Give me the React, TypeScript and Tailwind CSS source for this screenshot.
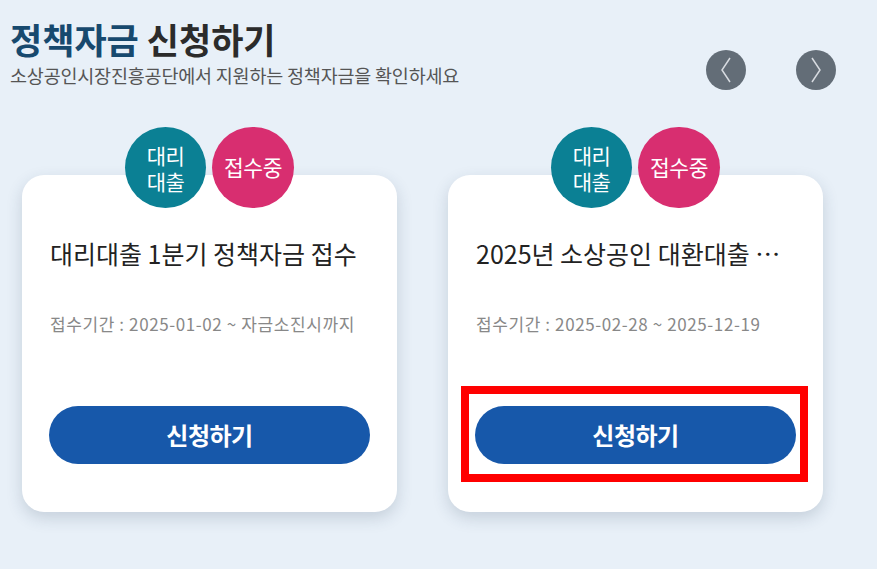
import React from "react";

const font = { fontFamily: '"Noto Sans CJK KR", "Noto Sans", sans-serif' };

function Badges() {
  return (
    <div className="absolute left-0 right-0 top-[-48px] flex justify-center gap-[6px]">
      <div className="w-[81px] h-[81px] rounded-full bg-[#0b8094] flex flex-col items-center justify-center text-white text-[21px] leading-[26px] tracking-[-0.5px]">
        <span>대리</span>
        <span>대출</span>
      </div>
      <div className="w-[82px] h-[81px] rounded-full bg-[#d82e70] flex items-center justify-center text-white text-[21.5px] tracking-[-0.5px]">
        접수중
      </div>
    </div>
  );
}

function Card({ title, period, highlight }: { title: string; period: string; highlight?: boolean }) {
  return (
    <div className="relative w-[375px] h-[337px] bg-white rounded-[22px] shadow-[0_6px_16px_rgba(40,60,90,0.18)] flex flex-col px-[27px]">
      <Badges />
      <div className="pt-[61px] pl-[1px] text-[25px] leading-[34px] text-[#222] whitespace-nowrap">
        {title}
      </div>
      <div className="mt-[42px] pl-[1px] text-[17px] leading-[24px] text-[#888] tracking-[0.6px] whitespace-nowrap">
        {period}
      </div>
      <button className="mt-[70px] h-[58px] w-full rounded-full bg-[#1758aa] text-white text-[24px] font-bold tracking-[-0.5px] flex items-center justify-center">
        신청하기
      </button>
      {highlight && (
        <div className="absolute left-[13px] top-[211px] w-[347px] h-[96px] border-[8px] border-[#ff0000]" />
      )}
    </div>
  );
}

function NavBtn({ dir }: { dir: "l" | "r" }) {
  return (
    <div className="w-[40px] h-[40px] rounded-full bg-[#636d77] flex items-center justify-center">
      <svg width="14" height="28" viewBox="0 0 14 28">
        {dir === "l" ? (
          <path d="M11 2 L3 14 L11 26" fill="none" stroke="#d7dbe0" strokeWidth="1.5" />
        ) : (
          <path d="M3 2 L11 14 L3 26" fill="none" stroke="#d7dbe0" strokeWidth="1.5" />
        )}
      </svg>
    </div>
  );
}

export default function App() {
  return (
    <div className="w-[877px] h-[569px] bg-[#e8f0f8] overflow-hidden" style={font}>
      <div className="flex justify-between pl-[10px] pr-[41px] pt-[16px]">
        <div>
          <div className="text-[35px] leading-[46px] font-bold">
            <span className="text-[#17496e]">정책자금</span>{" "}
            <span className="text-[#2b2b2b]">신청하기</span>
          </div>
          <div className="text-[18.5px] leading-[22px] text-[#555] tracking-[-0.2px] mt-[2px]">
            소상공인시장진흥공단에서 지원하는 정책자금을 확인하세요
          </div>
        </div>
        <div className="flex gap-[50px] pt-[34px]">
          <NavBtn dir="l" />
          <NavBtn dir="r" />
        </div>
      </div>
      <div className="flex gap-[51px] pl-[22px] mt-[85px]">
        <Card title="대리대출 1분기 정책자금 접수" period="접수기간 : 2025-01-02 ~ 자금소진시까지" />
        <Card title="2025년 소상공인 대환대출 …" period="접수기간 : 2025-02-28 ~ 2025-12-19" highlight />
      </div>
    </div>
  );
}
